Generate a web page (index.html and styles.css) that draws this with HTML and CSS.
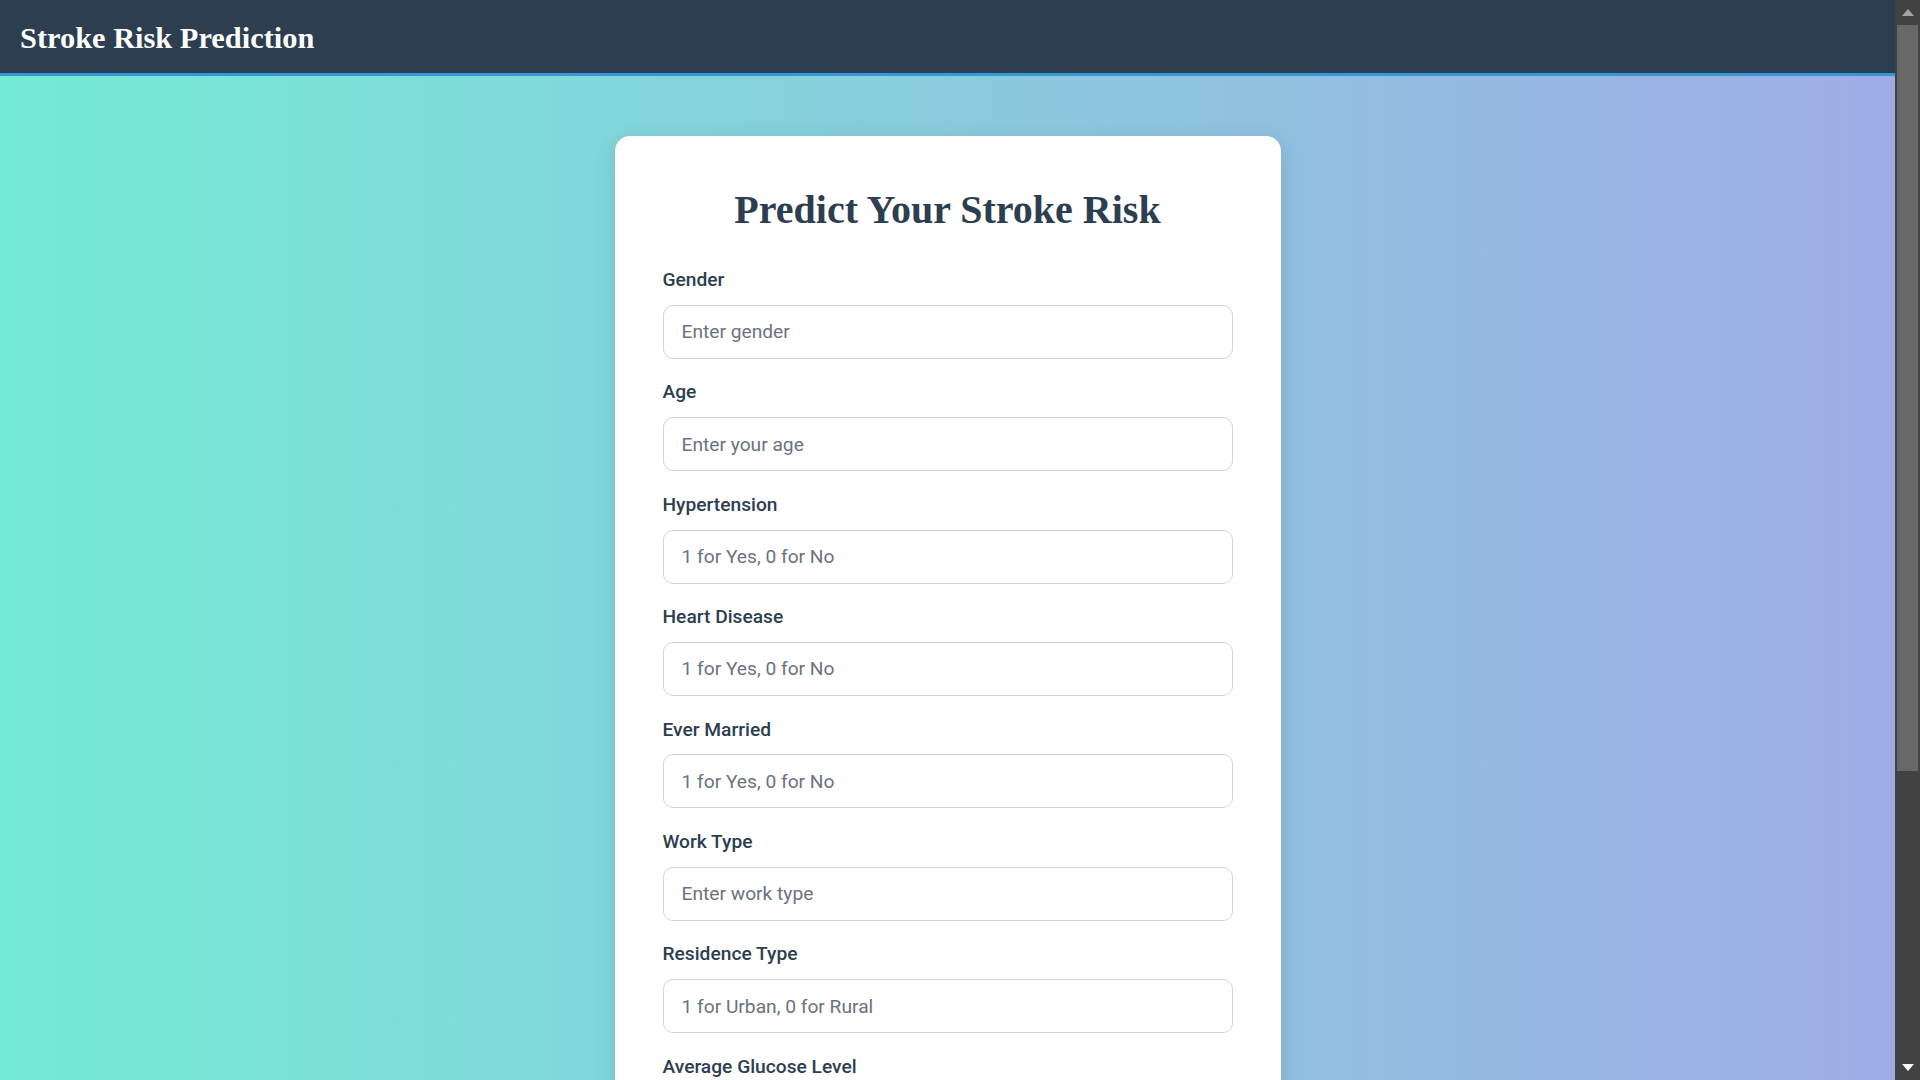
FILE: index.html
```html
<!DOCTYPE html>
<html lang="en">
<head>
<meta charset="UTF-8">
<title>Stroke Risk Prediction</title>
<link rel="stylesheet" href="styles.css">
</head>
<body>
<div class="viewport">
  <header class="topbar">
    <h1 class="brand">Stroke Risk Prediction</h1>
  </header>
  <main class="page">
    <form class="card">
      <h2 class="card-title">Predict Your Stroke Risk</h2>
      <div class="fields">
        <div class="field"><label class="field-label">Gender</label><input class="field-input" type="text" placeholder="Enter gender"></div>
        <div class="field"><label class="field-label">Age</label><input class="field-input" type="text" placeholder="Enter your age"></div>
        <div class="field"><label class="field-label">Hypertension</label><input class="field-input" type="text" placeholder="1 for Yes, 0 for No"></div>
        <div class="field"><label class="field-label">Heart Disease</label><input class="field-input" type="text" placeholder="1 for Yes, 0 for No"></div>
        <div class="field"><label class="field-label">Ever Married</label><input class="field-input" type="text" placeholder="1 for Yes, 0 for No"></div>
        <div class="field"><label class="field-label">Work Type</label><input class="field-input" type="text" placeholder="Enter work type"></div>
        <div class="field"><label class="field-label">Residence Type</label><input class="field-input" type="text" placeholder="1 for Urban, 0 for Rural"></div>
        <div class="field"><label class="field-label">Average Glucose Level</label><input class="field-input" type="text" placeholder="Enter glucose level"></div>
        <div class="field"><label class="field-label">BMI</label><input class="field-input" type="text" placeholder="Enter BMI"></div>
        <div class="field"><label class="field-label">Smoking Status</label><input class="field-input" type="text" placeholder="Enter smoking status"></div>
      </div>
      <button class="submit" type="button">Predict</button>
    </form>
  </main>
</div>
<div class="scrollbar" aria-hidden="true">
  <div class="sb-button">
    <svg width="12" height="7" viewBox="0 0 12 7"><polygon points="6,0 12,7 0,7" fill="#a3a3a3"/></svg>
  </div>
  <div class="sb-track">
    <div class="sb-thumb"></div>
  </div>
  <div class="sb-button">
    <svg width="12" height="7" viewBox="0 0 12 7"><polygon points="0,0 12,0 6,7" fill="#ffffff"/></svg>
  </div>
</div>
</body>
</html>
```
FILE: styles.css
```css
html, body {
  height: 100%;
}

body {
  margin: 0;
  display: flex;
  overflow: hidden;
  font-family: Roboto, "Liberation Sans", Arial, sans-serif;
  color: #2c3e50;
  background: #424242;
}

.viewport {
  flex: 1;
  min-width: 0;
  height: 100vh;
  overflow: hidden;
  background: linear-gradient(to right, #74ebd5, #9face6);
}

.scrollbar {
  width: 25px;
  flex: none;
  height: 100vh;
  display: flex;
  flex-direction: column;
  background: #424242;
}
.sb-button {
  height: 25px;
  flex: none;
  display: flex;
  align-items: center;
  justify-content: center;
}
.sb-track {
  flex: 1;
  display: flex;
  flex-direction: column;
  padding: 0 2px 0 2px;
}
.sb-thumb {
  height: 746px;
  background: #686868;
}

.topbar {
  box-sizing: border-box;
  height: 76px;
  background: #2c3e50;
  border-bottom: 3px solid #3498db;
  padding: 21px 20px 0;
}
.brand {
  margin: 0;
  font-family: "Liberation Serif", "Times New Roman", serif;
  font-weight: 700;
  font-size: 30.4px;
  line-height: 34px;
  color: #ffffff;
}

.page {
  padding: 60px 0 15px;
}

.card {
  box-sizing: border-box;
  width: 666px;
  margin: 0 auto;
  padding: 48px;
  background: #ffffff;
  border-radius: 15px;
  box-shadow: 0 6px 24px rgba(0, 0, 0, 0.12);
}

.card-title {
  margin: 0 0 36px;
  padding-top: 2px;
  text-align: center;
  font-family: "Liberation Serif", "Times New Roman", serif;
  font-weight: 700;
  font-size: 40px;
  color: #2c3e50;
}

.fields {
  display: flex;
  flex-direction: column;
  gap: 22.6px;
}
.field {
  display: flex;
  flex-direction: column;
}
.field-label {
  font-size: 19.2px;
  line-height: 22px;
  font-weight: 500;
  color: #2c3e50;
  margin-bottom: 13.8px;
}
.field-input {
  box-sizing: border-box;
  width: 100%;
  height: 54px;
  margin: 0;
  padding: 0 18px;
  border: 1px solid #d1d5db;
  border-radius: 10px;
  font-family: Roboto, "Liberation Sans", Arial, sans-serif;
  font-size: 19.2px;
  color: #2c3e50;
  background: #ffffff;
  outline: none;
}
.field-input::placeholder {
  color: #6b7280;
}

.submit {
  display: block;
  width: 100%;
  height: 50px;
  margin-top: 28px;
  border: none;
  border-radius: 10px;
  background: #3498db;
  color: #ffffff;
  font-family: Roboto, "Liberation Sans", Arial, sans-serif;
  font-size: 19.2px;
  font-weight: 500;
}
```
